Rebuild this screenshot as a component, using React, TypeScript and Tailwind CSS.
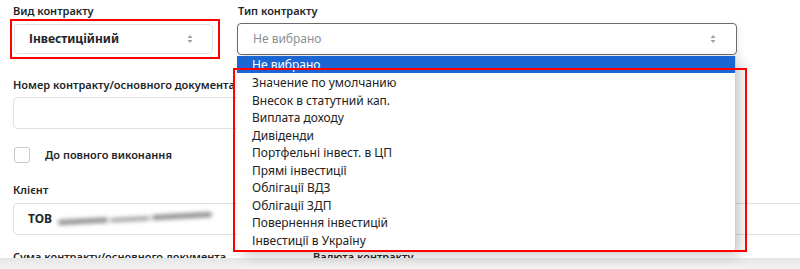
import React from "react";

const items = [
  "Значение по умолчанию",
  "Внесок в статутний кап.",
  "Виплата доходу",
  "Дивіденди",
  "Портфельні інвест. в ЦП",
  "Прямі інвестиції",
  "Облігації ВДЗ",
  "Облігації ЗДП",
  "Повернення інвестицій",
  "Інвестиції в Україну",
];

function Arrows({ className = "" }: { className?: string }) {
  return (
    <svg width="8" height="10" viewBox="0 0 8 10" className={className}>
      <path d="M4 1 L6.5 4 H1.5 Z" fill="#9aa0a6" />
      <path d="M4 9 L6.5 6 H1.5 Z" fill="#9aa0a6" />
    </svg>
  );
}

export default function App() {
  return (
    <div
      className="relative w-[800px] h-[269px] overflow-hidden bg-white text-[#212529]"
      style={{ fontFamily: '"Noto Sans", "Open Sans", sans-serif' }}
    >
      <div className="flex flex-col pl-[13px]">
        {/* Row 1 */}
        <div className="flex pt-[3px]">
          <div className="flex flex-col w-[224px]">
            <div className="text-[11px] font-semibold leading-[16px] h-[16px]">Вид контракту</div>
            <div className="-ml-[3px] w-[210px] border-2 border-[#ff0000] pt-[3px] pb-[3px] pl-[2px] pr-[5px]">
              <div className="flex items-center justify-between h-[30px] w-[199px] rounded-[4px] border border-[#dee2e6] pl-[14px] pr-[18px]">
                <span className="text-[12px] font-bold">Інвестиційний</span>
                <Arrows />
              </div>
            </div>
          </div>
          <div className="flex flex-col">
            <div className="text-[11px] font-semibold leading-[16px] h-[16px] pl-[1px]">Тип контракту</div>
            <div className="mt-[4px] flex items-center justify-between h-[32px] w-[500px] rounded-[4px] border border-[#6b6b6b] bg-white pl-[15px] pr-[19px] shadow-[2px_2px_6px_rgba(0,0,0,0.08)]">
              <span className="text-[12px] text-[#8a8f94]">Не вибрано</span>
              <Arrows />
            </div>
          </div>
        </div>

        {/* Row 2 */}
        <div className="mt-[18px] text-[11px] font-semibold leading-[16px]">Номер контракту/основного документа</div>
        <div className="mt-[4px] h-[32px] w-[700px] rounded-[4px] border border-[#dee2e6]"></div>

        {/* Row 3 */}
        <div className="mt-[18px] flex items-center gap-[15px] pl-[1px]">
          <div className="w-[16px] h-[16px] rounded-[3px] border border-[#c6cacd]"></div>
          <span className="text-[11px] font-semibold">До повного виконання</span>
        </div>

        {/* Row 4 */}
        <div className="mt-[18px] text-[11px] font-semibold leading-[16px]">Клієнт</div>
        <div className="mt-[5px] flex items-center h-[32px] w-[800px] rounded-[4px] border border-[#dee2e6] pl-[14px]">
          <span className="text-[12px] font-bold">ТОВ</span>
          <div className="ml-[6px] flex items-center gap-[2px] -rotate-[3deg] blur-[2px]">
            <div className="h-[5px] w-[50px] rounded-full bg-[#8a8a8a]"></div>
            <div className="h-[4px] w-[40px] rounded-full bg-[#9a9a9a]"></div>
            <div className="h-[5px] w-[60px] rounded-full bg-[#8a8a8a]"></div>
          </div>
        </div>

        {/* Row 5 */}
        <div className="mt-[14px] flex text-[11px] font-semibold leading-[16px]">
          <span className="w-[300px]">Сума контракту/основного документа</span>
          <span>Валюта контракту</span>
        </div>
      </div>

      {/* bottom fade band */}
      <div className="absolute left-0 right-0 top-[258px] h-[11px] bg-gradient-to-b from-[#e6e6e6] to-[#f3f3f3]"></div>

      {/* Dropdown list */}
      <div className="absolute left-[237px] top-[56px] w-[499px] rounded-b-[5px] bg-white shadow-[5px_4px_12px_rgba(0,0,0,0.2)] border-r border-b border-[#d0d0d0]">
        <div className="h-[17px] bg-[#1a66d2] pl-[15px] text-[12px] leading-[17px] text-white">Не вибрано</div>
        <div className="pt-[1px] pb-[2px]">
          {items.map((t) => (
            <div key={t} className="h-[17.5px] pl-[15px] text-[12px] leading-[17.5px] text-[#222]">
              {t}
            </div>
          ))}
        </div>
      </div>

      {/* Red highlight around list */}
      <div className="absolute left-[233px] top-[68px] w-[514px] h-[184px] border-2 border-[#ff0000] pointer-events-none"></div>
    </div>
  );
}
